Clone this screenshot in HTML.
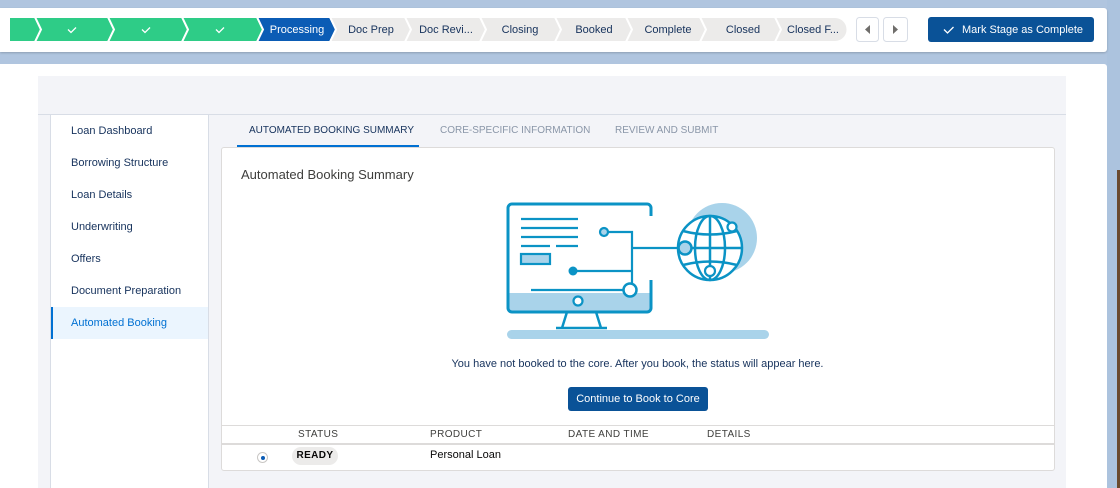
<!DOCTYPE html>
<html><head><meta charset="utf-8"><style>
*{margin:0;padding:0;box-sizing:border-box}
body{width:1120px;height:488px;overflow:hidden;background:#b0c5df;font-family:"Liberation Sans",sans-serif;position:relative}
.abs{position:absolute}
.t{position:absolute;font-size:11px;white-space:nowrap}
</style></head><body>
<div class="abs" style="left:1107px;top:0;width:13px;height:488px;background:#acc3de"></div>
<div class="abs" style="left:1117px;top:170px;width:3px;height:318px;background:#6b4a2e"></div>
<div class="abs" style="left:0;top:8px;width:1107px;height:44px;background:#fff;border-radius:0 3px 3px 0;box-shadow:0 1px 2px rgba(0,0,0,.2)"></div>
<svg class="abs" style="left:0;top:0" width="1120" height="60" font-family="Liberation Sans, sans-serif" font-size="11">
<g stroke="#fff" stroke-width="2">
<polygon points="9,17 35,17 41,29.5 35,42 9,42" fill="#2ecc87"/>
<polygon points="35,17 108,17 114,29.5 108,42 35,42 41,29.5" fill="#2ecc87"/>
<polygon points="108,17 182,17 188,29.5 182,42 108,42 114,29.5" fill="#2ecc87"/>
<polygon points="182,17 257,17 263,29.5 257,42 182,42 188,29.5" fill="#2ecc87"/>
<polygon points="257,17 330,17 336,29.5 330,42 257,42 263,29.5" fill="#0b5cb5"/>
<polygon points="330,17 405,17 411,29.5 405,42 330,42 336,29.5" fill="#ecebea"/>
<polygon points="405,17 480,17 486,29.5 480,42 405,42 411,29.5" fill="#ecebea"/>
<polygon points="480,17 555,17 561,29.5 555,42 480,42 486,29.5" fill="#ecebea"/>
<polygon points="555,17 626,17 632,29.5 626,42 555,42 561,29.5" fill="#ecebea"/>
<polygon points="626,17 700,17 706,29.5 700,42 626,42 632,29.5" fill="#ecebea"/>
<polygon points="700,17 775,17 781,29.5 775,42 700,42 706,29.5" fill="#ecebea"/>
<path d="M775,17 H835 A12.5,12.5 0 0 1 835,42 H775 L781,29.5Z" fill="#ecebea"/>
</g>
<g stroke="#fff" stroke-width="1.3" fill="none"><path d="M68,29.5 l3,3 l5,-5"/><path d="M142,29.5 l3,3 l5,-5"/><path d="M216,29.5 l3,3 l5,-5"/></g>
<g text-anchor="middle" fill="#16325c">
<text x="297" y="33" fill="#fff">Processing</text>
<text x="371" y="33">Doc Prep</text>
<text x="446" y="33">Doc Revi...</text>
<text x="520" y="33">Closing</text>
<text x="594" y="33">Booked</text>
<text x="668" y="33">Complete</text>
<text x="743" y="33">Closed</text>
<text x="813" y="33">Closed F...</text>
</g>
<rect x="856.5" y="17.5" width="22" height="24" rx="3" fill="#fff" stroke="#d8dde6"/>
<rect x="883.5" y="17.5" width="24" height="24" rx="3" fill="#fff" stroke="#d8dde6"/>
<polygon points="870,25 870,34 865,29.5" fill="#706e6b"/>
<polygon points="893,25 893,34 898,29.5" fill="#706e6b"/>
<rect x="928" y="17" width="166" height="25" rx="3" fill="#0a5297"/>
<path d="M944,29.5 l3.5,3.5 l6,-6" stroke="#fff" stroke-width="1.3" fill="none"/>
<text x="962" y="33" fill="#fff">Mark Stage as Complete</text>
</svg>
<div class="abs" style="left:0;top:64px;width:1107px;height:424px;background:#fff;border-radius:0 3px 0 0"></div>
<div class="abs" style="left:38px;top:76px;width:1028px;height:412px;background:#f3f4f8"></div>
<div class="abs" style="left:38px;top:114px;width:1028px;height:1px;background:#d8dde6"></div>
<div class="abs" style="left:50px;top:115px;width:159px;height:373px;background:#fff;border-left:1px solid #d8dde6;border-right:1px solid #d8dde6"></div>
<div class="abs" style="left:51px;top:307px;width:157px;height:32px;background:#ebf5fe;border-left:2px solid #0070d2"></div>
<div class="t" style="left:71px;top:125px;color:#16325c">Loan Dashboard</div>
<div class="t" style="left:71px;top:157px;color:#16325c">Borrowing Structure</div>
<div class="t" style="left:71px;top:189px;color:#16325c">Loan Details</div>
<div class="t" style="left:71px;top:221px;color:#16325c">Underwriting</div>
<div class="t" style="left:71px;top:253px;color:#16325c">Offers</div>
<div class="t" style="left:71px;top:285px;color:#16325c">Document Preparation</div>
<div class="t" style="left:71px;top:317px;color:#0070d2">Automated Booking</div>
<div class="t" style="left:249px;top:125px;font-size:10px;color:#16325c">AUTOMATED BOOKING SUMMARY</div>
<div class="t" style="left:440px;top:125px;font-size:10px;color:#8a96a8">CORE-SPECIFIC INFORMATION</div>
<div class="t" style="left:615px;top:125px;font-size:10px;color:#8a96a8">REVIEW AND SUBMIT</div>
<div class="abs" style="left:221px;top:147px;width:834px;height:324px;background:#fff;border:1px solid #dddbda;border-radius:3px"></div>
<div class="abs" style="left:237px;top:145px;width:182px;height:2px;background:#0070d2"></div>
<div class="t" style="left:241px;top:167px;font-size:13px;color:#3e3e3c">Automated Booking Summary</div>
<svg class="abs" style="left:480px;top:190px" width="300" height="160" fill="none" stroke="#0b93c5" stroke-width="3">
<circle cx="242" cy="48" r="35" fill="#a9d3ea" stroke="none"/>
<rect x="28" y="103" width="143" height="19" fill="#a9d3ea" stroke="none"/>
<path d="M171,26 V18 a4,4 0 0 0 -4,-4 H32 a4,4 0 0 0 -4,4 V118 a4,4 0 0 0 4,4 H167 a4,4 0 0 0 4,-4 V90"/>
<path d="M87,122 L82,138 M116,122 L121,138 M76,138 H127" stroke-width="2.5"/>
<rect x="27" y="140" width="262" height="9" rx="4.5" fill="#a9d3ea" stroke="none"/>
<g stroke-width="2.2"><path d="M41,29 H98 M41,38 H98 M41,47 H98 M41,56 H70 M76,56 H98"/>
<rect x="41" y="64" width="29" height="10" fill="#a9d3ea"/>
<path d="M128,42 H152 V100 M152,58 H205 M97,81 H152 M51,100 H144"/></g>
<circle cx="124" cy="42" r="4" fill="#a9d3ea" stroke-width="2.2"/>
<circle cx="93" cy="81" r="4.5" fill="#0b93c5" stroke="none"/>
<circle cx="150" cy="100" r="6.5" fill="#fff" stroke-width="2.5"/>
<circle cx="98" cy="111" r="4.5" fill="#fff" stroke-width="2.2"/>
<g stroke-width="2.5"><circle cx="230" cy="58" r="32" fill="#fff"/>
<path d="M230,26 V90 M198,58 H262"/>
<ellipse cx="230" cy="58" rx="15" ry="32"/>
<path d="M203,41 Q230,48 257,41 M203,75 Q230,68 257,75"/></g>
<circle cx="205" cy="58" r="6.5" fill="#a9d3ea" stroke-width="2.5"/>
<circle cx="252" cy="37" r="4.5" fill="#fff" stroke-width="2.2"/>
<circle cx="230" cy="81" r="5" fill="#fff" stroke-width="2.2"/>
</svg>
<div class="t" style="left:0;width:1275px;text-align:center;top:358px;color:#16325c">You have not booked to the core. After you book, the status will appear here.</div>
<div class="abs" style="left:568px;top:387px;width:140px;height:24px;background:#0a5297;border-radius:3px;color:#fff;font-size:11px;text-align:center;line-height:24px">Continue to Book to Core</div>
<div class="abs" style="left:222px;top:425px;width:832px;height:1px;background:#dddbda"></div>
<div class="abs" style="left:222px;top:443px;width:832px;height:2px;background:#dddbda"></div>
<div class="t" style="left:298px;top:429px;font-size:10px;color:#3e3e3c;letter-spacing:.4px">STATUS</div>
<div class="t" style="left:430px;top:429px;font-size:10px;color:#3e3e3c;letter-spacing:.4px">PRODUCT</div>
<div class="t" style="left:568px;top:429px;font-size:10px;color:#3e3e3c;letter-spacing:.4px">DATE AND TIME</div>
<div class="t" style="left:707px;top:429px;font-size:10px;color:#3e3e3c;letter-spacing:.4px">DETAILS</div>
<div class="abs" style="left:257px;top:452px;width:11px;height:11px;border-radius:50%;border:1px solid #c9c7c5;background:#fff"><div class="abs" style="left:2.5px;top:2.5px;width:4px;height:4px;border-radius:50%;background:#0b5cb5"></div></div>
<div class="abs" style="left:292px;top:447px;width:46px;height:18px;border-radius:9px;background:#ecebea;color:#080707;font-size:10px;font-weight:bold;text-align:center;line-height:18px;letter-spacing:.4px">READY</div>
<div class="t" style="left:430px;top:449px;color:#080707">Personal Loan</div>
</body></html>
